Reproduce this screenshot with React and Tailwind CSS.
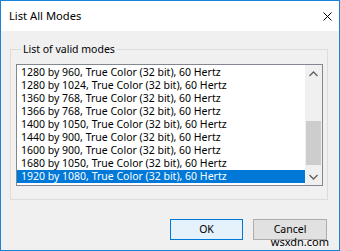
import React from 'react';

const modes = [
  '1280 by 960, True Color (32 bit), 60 Hertz',
  '1280 by 1024, True Color (32 bit), 60 Hertz',
  '1360 by 768, True Color (32 bit), 60 Hertz',
  '1366 by 768, True Color (32 bit), 60 Hertz',
  '1400 by 1050, True Color (32 bit), 60 Hertz',
  '1440 by 900, True Color (32 bit), 60 Hertz',
  '1600 by 900, True Color (32 bit), 60 Hertz',
  '1680 by 1050, True Color (32 bit), 60 Hertz',
  '1920 by 1080, True Color (32 bit), 60 Hertz',
];

export default function App() {
  const selected = 8;
  return (
    <div
      className="relative w-[340px] h-[251px] border border-[#1883d7] bg-[#f0f0f0] flex flex-col text-black"
      style={{ fontFamily: '"Noto Sans", "Liberation Sans", sans-serif' }}
    >
      {/* Title bar */}
      <div className="h-[30px] bg-white flex items-center justify-between pl-[8px] pr-[7px]">
        <span className="text-[11.2px] leading-[14px]">List All Modes</span>
        <svg width="9" height="9" viewBox="0 0 9 9">
          <path d="M0.5 0.5 L8.5 8.5 M8.5 0.5 L0.5 8.5" stroke="#000" strokeWidth="1" fill="none" />
        </svg>
      </div>

      {/* Body */}
      <div className="flex-1 flex flex-col pt-[10px] pl-[9px] pr-[11px]">
        <fieldset className="border border-[#dcdcdc] pl-[5px] pr-[4px] pb-[13px]">
          <legend className="ml-[5px] px-[2px] text-[10.5px] leading-[16px]">List of valid modes</legend>
          <div className="mt-[7px] h-[122px] border border-[#828790] bg-white flex">
            <div className="flex-1 pt-[1px] overflow-hidden">
              {modes.map((m, i) => (
                <div
                  key={m}
                  className={
                    'h-[13px] leading-[13px] pl-[4px] text-[10.5px] whitespace-nowrap ' +
                    (i === selected ? 'bg-[#0078d7] text-white' : '')
                  }
                >
                  {m}
                </div>
              ))}
            </div>
            {/* Scrollbar */}
            <div className="w-[17px] bg-[#f0f0f0] flex flex-col">
              <div className="h-[17px] flex items-center justify-center">
                <svg width="9" height="6" viewBox="0 0 9 6">
                  <path d="M0.5 5 L4.5 1 L8.5 5" stroke="#606060" strokeWidth="1.3" fill="none" />
                </svg>
              </div>
              <div className="flex-1 flex flex-col">
                <div className="h-[39px]" />
                <div className="h-[44px] mx-[1px] bg-[#cdcdcd]" />
              </div>
              <div className="h-[17px] flex items-center justify-center">
                <svg width="9" height="6" viewBox="0 0 9 6">
                  <path d="M0.5 1 L4.5 5 L8.5 1" stroke="#606060" strokeWidth="1.3" fill="none" />
                </svg>
              </div>
            </div>
          </div>
        </fieldset>

        {/* Buttons */}
        <div className="flex justify-end gap-[10px] mt-[19px] pr-[1px]">
          <button className="w-[73px] h-[21px] border border-[#0078d7] bg-[#e5f1fb] text-[10.5px]">OK</button>
          <button className="w-[74px] h-[21px] border border-[#adadad] bg-[#e1e1e1] text-[10.5px]">Cancel</button>
        </div>
      </div>

      <span className="absolute right-[10px] bottom-[2px] text-[11px] leading-[12px] text-black">wsxdn.com</span>
    </div>
  );
}
